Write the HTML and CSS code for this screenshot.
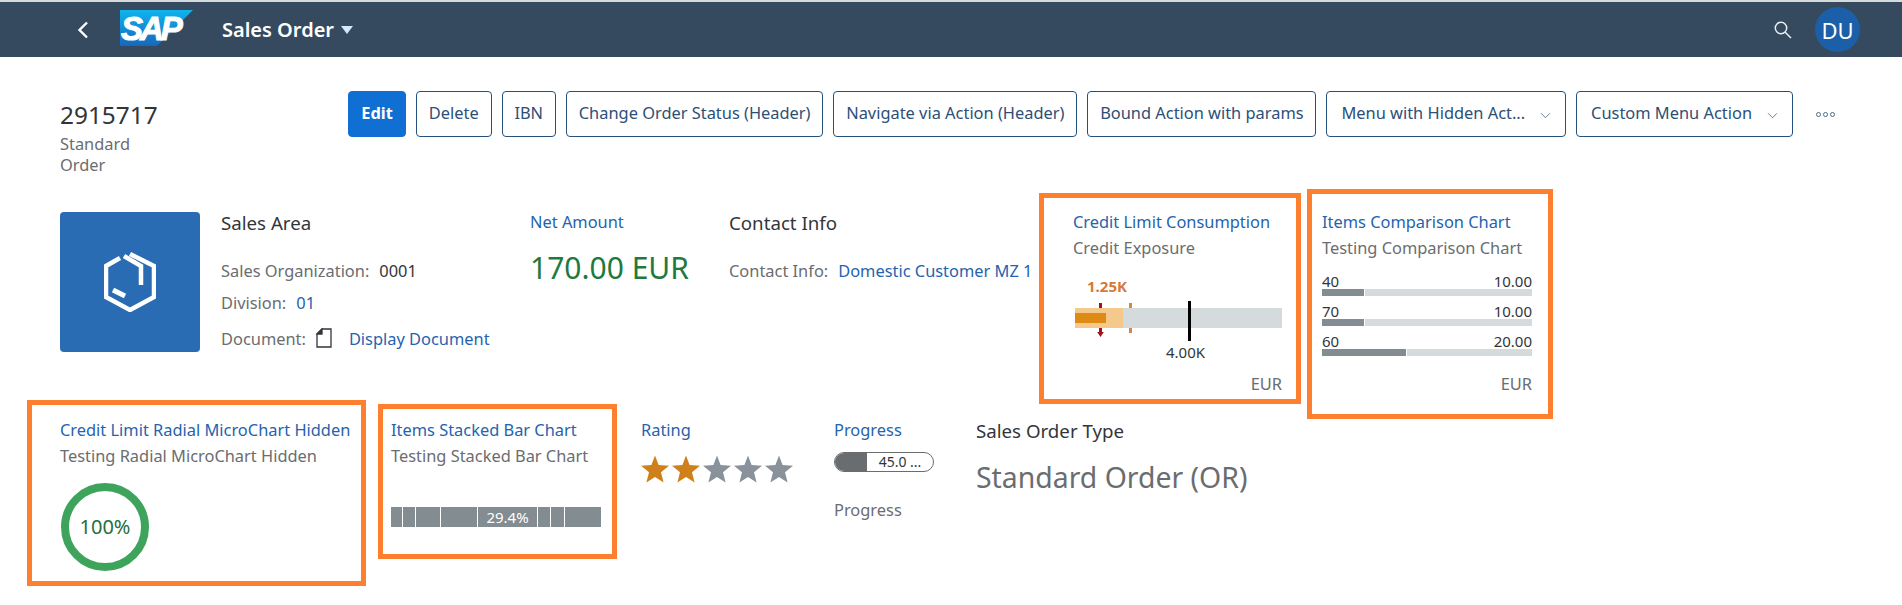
FILE: index.html
```html
<!DOCTYPE html>
<html lang="en">
<head>
    <meta charset="UTF-8">
    <meta name="viewport" content="width=device-width, initial-scale=1.0">
    <title>Sales Order</title>
    <link rel="stylesheet" href="styles.css">
</head>
<body>
    <header class="shell">
        <svg class="back-icon" viewBox="0 0 12 18"><path d="M10 1.5 2.5 9l7.5 7.5"/></svg>
        <svg class="logo" viewBox="0 0 73 36">
            <defs>
                <linearGradient id="logoFill" x1="0" y1="0" x2="0" y2="1">
                    <stop offset="0" stop-color="#10b4ee"/>
                    <stop offset="1" stop-color="#1568bb"/>
                </linearGradient>
            </defs>
            <polygon points="0,0 73,0 37,36 0,36" fill="url(#logoFill)"/>
            <text x="1" y="30" class="logo-text">SAP</text>
        </svg>
        <div class="app-title">Sales Order</div>
        <span class="app-caret"></span>
        <svg class="search-icon" viewBox="0 0 18 18"><circle cx="7" cy="7" r="5.7"/><path d="M11 11l6 6"/></svg>
        <div class="avatar">DU</div>
    </header>

    <main>
        <section class="object-header">
            <div class="object-title">
                <h1>2915717</h1>
                <p>Standard<br>Order</p>
            </div>
            <div class="actions">
                <button class="btn btn-primary">Edit</button>
                <button class="btn">Delete</button>
                <button class="btn">IBN</button>
                <button class="btn">Change Order Status (Header)</button>
                <button class="btn">Navigate via Action (Header)</button>
                <button class="btn">Bound Action with params</button>
                <button class="btn btn-menu">Menu with Hidden Act...<svg viewBox="0 0 12 8"><path d="M1 1.5 6 6.5l5-5"/></svg></button>
                <button class="btn btn-menu">Custom Menu Action<svg viewBox="0 0 12 8"><path d="M1 1.5 6 6.5l5-5"/></svg></button>
                <span class="overflow-dots"><i></i><i></i><i></i></span>
            </div>
        </section>

        <section class="row row-top">
            <div class="tile">
                <svg viewBox="0 0 52 60">
                    <path d="M16 6 2 14V45L26 58 50 45V14L26 2"/>
                    <path d="M20 4 37 14V33"/>
                    <path d="M9 38 21 44" class="tile-dash"/>
                </svg>
            </div>
            <div class="facet facet-area">
                <h2>Sales Area</h2>
                <div class="field"><span class="label">Sales Organization:</span><span class="value">0001</span></div>
                <div class="field"><span class="label">Division:</span><a class="link">01</a></div>
                <div class="field field-doc">
                    <span class="label">Document:</span>
                    <svg class="doc-icon" viewBox="0 0 16 20"><path d="M6 1h9v18H1V6z"/><path d="M6 1v5H1z" class="doc-fold"/></svg>
                    <a class="link">Display Document</a>
                </div>
            </div>
            <div class="facet facet-amount">
                <a class="link">Net Amount</a>
                <div class="amount">170.00 EUR</div>
            </div>
            <div class="facet facet-contact">
                <h2>Contact Info</h2>
                <div class="field"><span class="label">Contact Info:</span><a class="link">Domestic Customer MZ 1</a></div>
            </div>

            <div class="card card-bullet">
                <a class="link">Credit Limit Consumption</a>
                <p class="sub">Credit Exposure</p>
                <div class="bullet">
                    <span class="bullet-value">1.25K</span>
                    <div class="tick tick-red"></div>
                    <svg class="tick-arrow" viewBox="0 0 8 6"><path d="M0 0h8L4 6z"/></svg>
                    <div class="tick tick-orange"></div>
                    <div class="bullet-track"></div>
                    <div class="bullet-light"></div>
                    <div class="bullet-bar"></div>
                    <div class="tick tick-target"></div>
                    <span class="bullet-target">4.00K</span>
                </div>
                <div class="unit">EUR</div>
            </div>

            <div class="card card-compare">
                <a class="link">Items Comparison Chart</a>
                <p class="sub">Testing Comparison Chart</p>
                <div class="compare">
                    <div class="compare-row">
                        <div class="compare-text"><span>40</span><span>10.00</span></div>
                        <div class="compare-bar"><i style="width: 20%"></i><b></b></div>
                    </div>
                    <div class="compare-row">
                        <div class="compare-text"><span>70</span><span>10.00</span></div>
                        <div class="compare-bar"><i style="width: 20%"></i><b></b></div>
                    </div>
                    <div class="compare-row">
                        <div class="compare-text"><span>60</span><span>20.00</span></div>
                        <div class="compare-bar"><i style="width: 40%"></i><b></b></div>
                    </div>
                </div>
                <div class="unit">EUR</div>
            </div>
        </section>

        <section class="row row-bottom">
            <div class="card card-radial">
                <a class="link">Credit Limit Radial MicroChart Hidden</a>
                <p class="sub">Testing Radial MicroChart Hidden</p>
                <div class="radial">100%</div>
            </div>
            <div class="card card-stacked">
                <a class="link">Items Stacked Bar Chart</a>
                <p class="sub">Testing Stacked Bar Chart</p>
                <div class="stacked">
                    <i style="width: 12px"></i>
                    <i style="width: 13px"></i>
                    <i style="width: 25px"></i>
                    <i style="width: 37px"></i>
                    <i style="width: 60px">29.4%</i>
                    <i style="width: 13px"></i>
                    <i style="width: 14px"></i>
                    <i style="width: 36px"></i>
                </div>
            </div>
            <div class="facet facet-rating">
                <a class="link">Rating</a>
                <div class="stars">
                    <svg class="star star-on" viewBox="0 0 28 27"><polygon points="14,0 17.6,9.6 28,10.2 20,16.8 22.6,27 14,21.4 5.4,27 8,16.8 0,10.2 10.4,9.6"/></svg>
                    <svg class="star star-on" viewBox="0 0 28 27"><polygon points="14,0 17.6,9.6 28,10.2 20,16.8 22.6,27 14,21.4 5.4,27 8,16.8 0,10.2 10.4,9.6"/></svg>
                    <svg class="star" viewBox="0 0 28 27"><polygon points="14,0 17.6,9.6 28,10.2 20,16.8 22.6,27 14,21.4 5.4,27 8,16.8 0,10.2 10.4,9.6"/></svg>
                    <svg class="star" viewBox="0 0 28 27"><polygon points="14,0 17.6,9.6 28,10.2 20,16.8 22.6,27 14,21.4 5.4,27 8,16.8 0,10.2 10.4,9.6"/></svg>
                    <svg class="star" viewBox="0 0 28 27"><polygon points="14,0 17.6,9.6 28,10.2 20,16.8 22.6,27 14,21.4 5.4,27 8,16.8 0,10.2 10.4,9.6"/></svg>
                </div>
            </div>
            <div class="facet facet-progress">
                <a class="link">Progress</a>
                <div class="progress"><i style="width: 32px"></i><span>45.0 ...</span></div>
                <p class="sub">Progress</p>
            </div>
            <div class="facet facet-type">
                <h2>Sales Order Type</h2>
                <div class="type-value">Standard Order (OR)</div>
            </div>
        </section>
    </main>
</body>
</html>
```

FILE: styles.css
```css
body {
    font-family: "Noto Sans", Arial, sans-serif;
    font-size: 16.4px;
    margin: 0;
    padding: 0;
    background-color: #fff;
    color: #32363a;
    overflow: hidden;
}
h1, h2, p {
    margin: 0;
    font-weight: 400;
}
.link {
    color: #2563ae;
    line-height: 22px;
    display: block;
    white-space: nowrap;
}

/* shell bar */
.shell {
    height: 55px;
    border-top: 2px solid #d5dadd;
    background-color: #354a5f;
    display: flex;
    align-items: center;
    color: #fff;
}
.back-icon {
    width: 12px;
    height: 18px;
    margin-left: 77px;
    fill: none;
    stroke: #fff;
    stroke-width: 2.4;
}
.logo {
    width: 73px;
    height: 36px;
    margin-left: 31px;
    margin-top: -3px;
}
.logo-text {
    font-family: "Liberation Sans", Arial, sans-serif;
    font-weight: 700;
    font-style: italic;
    font-size: 33px;
    letter-spacing: -3px;
    fill: #fff;
    stroke: #fff;
    stroke-width: 1;
}
.app-title {
    margin-left: 29px;
    font-size: 20px;
    font-weight: 600;
}
.app-caret {
    margin-left: 7px;
    border-left: 6px solid transparent;
    border-right: 6px solid transparent;
    border-top: 8px solid #d1e8ff;
}
.search-icon {
    width: 18px;
    height: 18px;
    margin-left: auto;
    fill: none;
    stroke: #e8eef4;
    stroke-width: 1.5;
}
.avatar {
    width: 45px;
    height: 45px;
    margin-left: 23px;
    margin-right: 42px;
    border-radius: 50%;
    background-color: #1b5fa8;
    display: flex;
    align-items: center;
    justify-content: center;
    font-size: 22px;
}

/* object page header */
.object-header {
    display: flex;
    padding: 34px 0 0 60px;
    height: 98px;
}
.object-title {
    width: 288px;
    padding-top: 9px;
}
.object-title h1 {
    font-size: 24.4px;
    line-height: 30px;
}
.object-title p {
    margin-top: 3px;
    line-height: 21px;
    color: #6a6d70;
}
.actions {
    display: flex;
    gap: 10px;
    align-items: flex-start;
}
.btn {
    height: 46px;
    padding: 0 11.85px 3px;
    background: #fff;
    border: 1px solid #24527d;
    border-radius: 4px;
    color: #2c4f77;
    font-family: inherit;
    font-size: 16.4px;
    white-space: nowrap;
}
.btn-primary {
    width: 58px;
    padding: 0 0 3px;
    background-color: #0f6fd2;
    border-color: #0f6fd2;
    color: #fff;
    font-weight: 700;
}
.btn-menu {
    padding: 0 14px 3px;
}
.btn-menu svg {
    width: 11px;
    height: 7px;
    margin-left: 15px;
    fill: none;
    stroke: #4a6a8c;
    stroke-width: 1;
}
.overflow-dots {
    display: flex;
    gap: 2px;
    margin: 21px 0 0 13px;
}
.overflow-dots i {
    width: 5px;
    height: 5px;
    border: 1px solid #4a6a8c;
    border-radius: 50%;
    box-sizing: border-box;
}

/* content rows */
.row {
    display: flex;
    align-items: flex-start;
}
.row-top {
    height: 211px;
}
.row-bottom {
    padding-left: 27px;
}
.tile {
    width: 140px;
    height: 140px;
    margin: 23px 0 0 60px;
    background-color: #2a6cb3;
    border-radius: 4px;
    display: flex;
    align-items: center;
    justify-content: center;
}
.tile svg {
    width: 52px;
    height: 60px;
    fill: none;
    stroke: #fff;
    stroke-width: 4.5;
}
.tile .tile-dash {
    stroke-width: 5;
}
.facet {
    padding-top: 22px;
}
.row-bottom .facet {
    padding-top: 19px;
}
.facet h2 {
    font-size: 18.7px;
    line-height: 24px;
}
.facet-area {
    margin-left: 21px;
    width: 309px;
}
.facet-amount {
    width: 199px;
}
.facet-contact {
    width: 310px;
}
.field {
    display: flex;
    margin-top: 25px;
    line-height: 22px;
}
.field + .field {
    margin-top: 10px;
}
.field + .field-doc {
    margin-top: 14px;
}
.label {
    color: #6a6d70;
    margin-right: 10px;
}
.doc-icon {
    width: 16px;
    height: 20px;
    margin-right: 17px;
    fill: none;
    stroke: #32363a;
    stroke-width: 1.3;
}
.doc-icon .doc-fold {
    fill: #32363a;
}
.amount {
    margin-top: 13px;
    font-size: 30px;
    line-height: 44px;
    color: #1f7a3d;
    white-space: nowrap;
}

/* charts */
.card {
    box-sizing: border-box;
    border: 5px solid #fe7f2d;
}
.sub {
    margin-top: 4px;
    line-height: 22px;
    color: #6a6d70;
    white-space: nowrap;
}
.card-bullet {
    width: 262px;
    height: 211px;
    margin-top: 4px;
    padding: 13px 14px 0 29px;
}
.bullet {
    position: relative;
    height: 87px;
    margin: 16px 0 0 2px;
}
.bullet-value {
    position: absolute;
    left: 12px;
    top: 0;
    font-size: 15px;
    line-height: 22px;
    font-weight: 700;
    color: #d5793a;
}
.bullet-track, .bullet-light, .bullet-bar, .tick, .tick-arrow {
    position: absolute;
}
.bullet-track {
    left: 0;
    top: 33px;
    width: 207px;
    height: 20px;
    background-color: #d5dadd;
}
.bullet-light {
    left: 0;
    top: 33px;
    width: 48px;
    height: 20px;
    background-color: #f5c98c;
}
.bullet-bar {
    left: 0;
    top: 38px;
    width: 31px;
    height: 10px;
    background-color: #df8a14;
}
.tick {
    width: 3px;
}
.tick-red {
    left: 24px;
    top: 28px;
    height: 31px;
    background-color: #a5101d;
}
.tick-arrow {
    left: 22px;
    top: 57px;
    width: 7px;
    height: 5px;
    fill: #a5101d;
}
.tick-orange {
    left: 54px;
    top: 28px;
    height: 30px;
    background-color: #d5873a;
}
.tick-target {
    left: 113px;
    top: 26px;
    height: 40px;
    background-color: #000;
}
.bullet-target {
    position: absolute;
    left: 91px;
    top: 66px;
    font-size: 15px;
    line-height: 22px;
}
.unit {
    margin-top: 11px;
    text-align: right;
    line-height: 22px;
    color: #6a6d70;
}
.card-compare {
    width: 246px;
    height: 230px;
    margin-left: 6px;
    padding: 17px 16px 0 10px;
}
.compare {
    margin-top: 15px;
    margin-bottom: 17px;
}
.compare-row + .compare-row {
    margin-top: 8px;
}
.compare-text {
    display: flex;
    justify-content: space-between;
    font-size: 15px;
    line-height: 15px;
}
.compare-bar {
    display: flex;
    gap: 1px;
    height: 7px;
}
.compare-bar i {
    background-color: #838c90;
}
.compare-bar b {
    flex: 1;
    background-color: #d5dadd;
}
.card-radial {
    width: 339px;
    height: 186px;
    padding: 14px 0 0 28px;
}
.radial {
    box-sizing: border-box;
    width: 88px;
    height: 88px;
    margin: 16px 0 0 1px;
    padding-bottom: 2px;
    border: 8px solid #3fa45b;
    border-radius: 50%;
    display: flex;
    align-items: center;
    justify-content: center;
    font-size: 20px;
    color: #256f3a;
}
.card-stacked {
    width: 239px;
    height: 155px;
    margin: 4px 0 0 12px;
    padding: 10px 0 0 8px;
}
.stacked {
    display: flex;
    height: 20px;
    margin-top: 40px;
    color: #fff;
    font-size: 15px;
    line-height: 20px;
    text-align: center;
}
.stacked i {
    box-sizing: border-box;
    font-style: normal;
    background-color: #838c90;
    border-right: 1px solid #fff;
}
.stacked i:last-child {
    border-right: 0;
}
.facet-rating {
    width: 170px;
    margin-left: 24px;
}
.stars {
    display: flex;
    gap: 3px;
    margin-top: 14px;
}
.star {
    width: 28px;
    height: 28px;
    fill: #89919a;
}
.star-on {
    fill: #d0801a;
}
.facet-progress {
    width: 142px;
    margin-left: 23px;
}
.progress {
    box-sizing: border-box;
    display: flex;
    width: 100px;
    height: 20px;
    margin-top: 11px;
    border: 1px solid #6a6d70;
    border-radius: 10px;
    overflow: hidden;
    font-size: 14px;
    line-height: 18px;
}
.progress i {
    background-color: #6a6d70;
}
.progress span {
    flex: 1;
    text-align: center;
}
.facet-progress .sub {
    margin-top: 27px;
}
.type-value {
    margin-top: 12px;
    font-size: 28.4px;
    line-height: 44px;
    color: #6a6d70;
    white-space: nowrap;
}
```
